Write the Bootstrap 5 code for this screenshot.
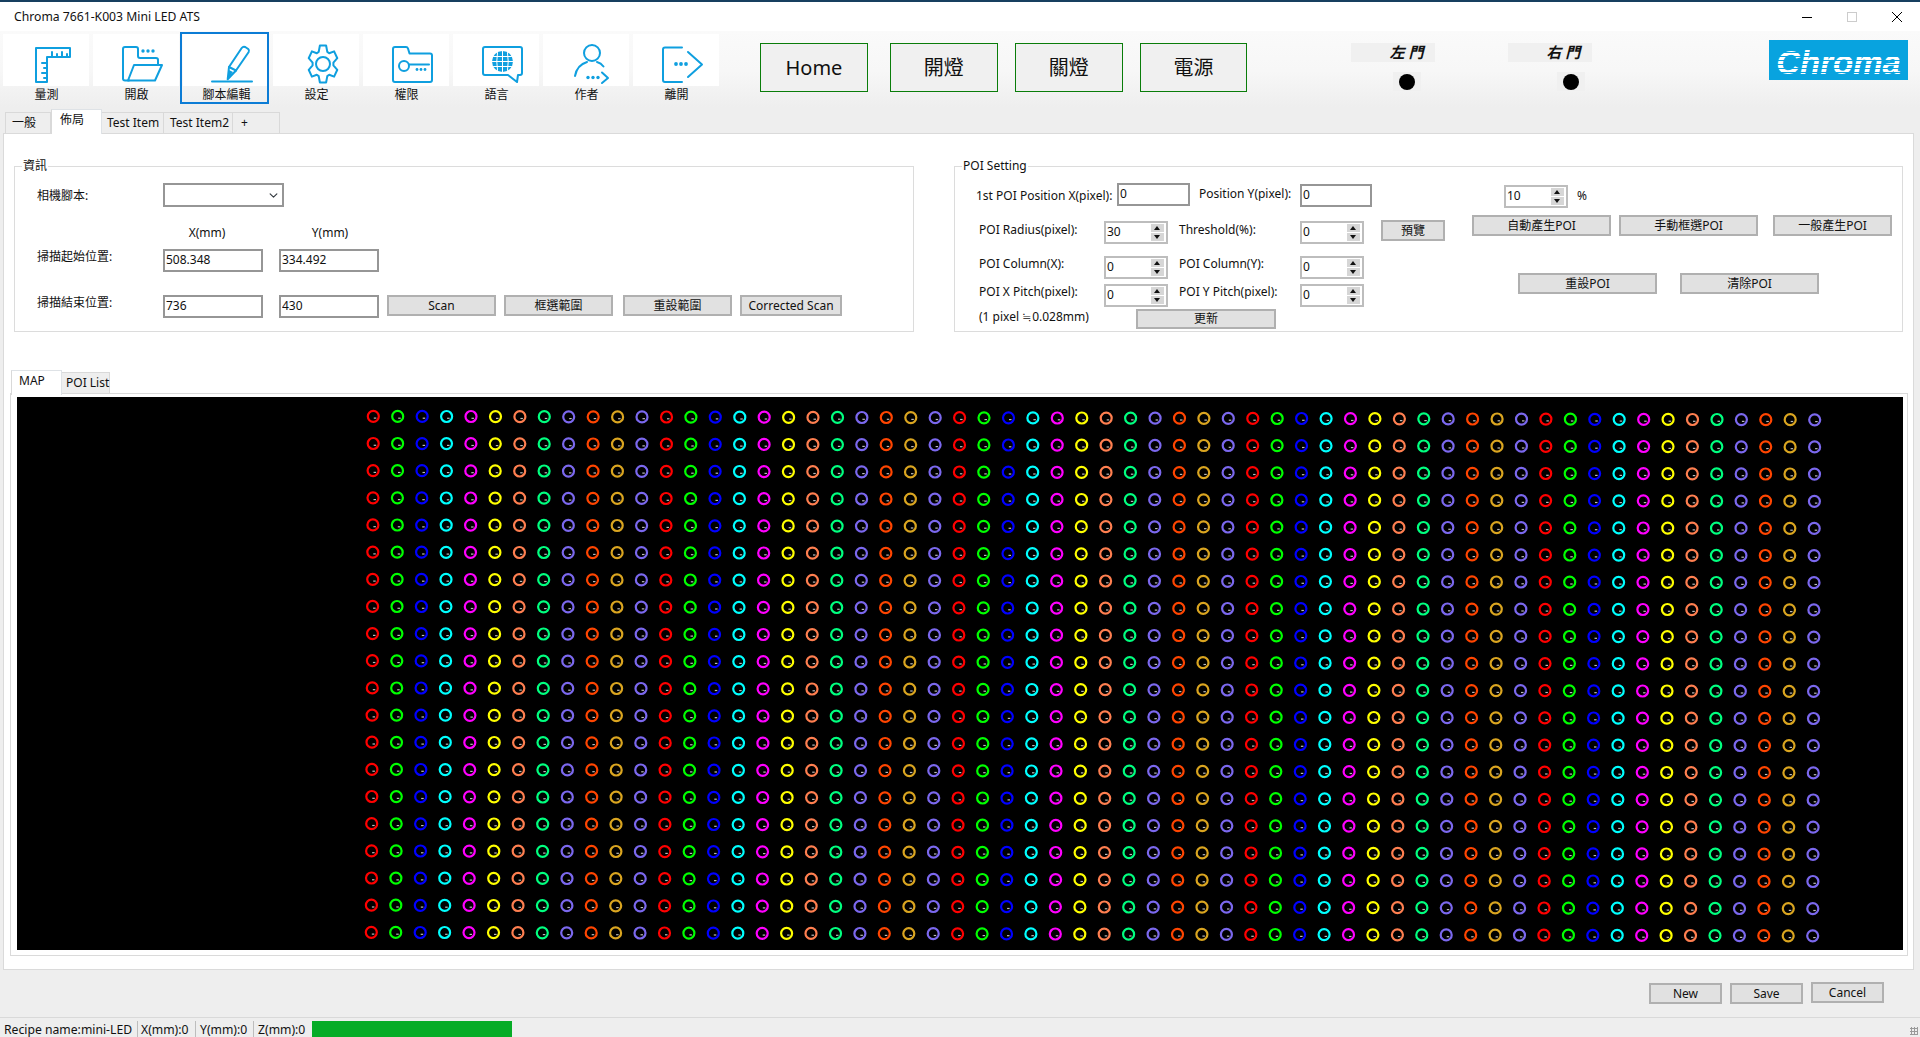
<!DOCTYPE html>
<html lang="zh-Hant">
<head>
<meta charset="utf-8">
<title>Chroma 7661-K003 Mini LED ATS</title>
<link href="https://cdn.jsdelivr.net/npm/bootstrap@5.3.0/dist/css/bootstrap.min.css" rel="stylesheet">
<style>
html,body{height:1037px;overflow:hidden}
body{background:#eee;color:#111;font-family:"Noto Sans","Noto Sans CJK TC",sans-serif;font-size:12px;line-height:16px}
/* title bar */
.titlebar{height:31px;background:#fff;border-top:2px solid #163f5f;padding-left:14px}
.titlebar .ttl{font-size:12.2px}
.win{margin-right:18px;gap:35px}
.win svg{display:block}
/* ribbon */
.ribbon{height:102px;background:linear-gradient(#fafafa 0,#f7f7f7 40px,#eee 76px,#eee 100%)}
.ribbon-top{height:81px}
.tools{padding:1px 0 0 3px;gap:4px}
.tool{width:86px;height:72px;font-size:12px;text-align:center}
.tool-img{display:block;width:86px;height:52px;margin-top:2px;background:#fff}
.tool-img path,.tool-img circle,.tool-img line{fill:none;stroke:#0f9fdf;stroke-width:2;stroke-linecap:round;stroke-linejoin:round}
.tool-img .fill{fill:#0f9fdf;stroke:none}
.tool-img .wl{stroke:#fff;stroke-width:1}
.tool-label{display:block;margin-top:1px;padding-left:1px;line-height:16px}
.tool.active{width:89px;margin-left:-3px;padding-left:3px;outline:2px solid #0c7cd5;outline-offset:-2px;position:relative}
.big{width:108px;height:49px;margin-top:12px;background:#f0f0f0;border:1px solid #0a7d0a;border-radius:0;font-size:20px;line-height:24px;padding:0;color:#111}
.big.b1{margin-left:41px}.big.b2{margin-left:22px}.big.b3{margin-left:17px}
.door{width:84px;margin-top:12px}
.door.d1{margin-left:104px}.door.d2{margin-left:73px}
.door-label{height:19px;background:#f0f0f0;font-weight:700;font-style:italic;font-size:15px;line-height:19px;letter-spacing:4px;padding-left:38px;white-space:nowrap}
.door.d2 .door-label{padding-left:38px}
.led-box{width:28px;height:19px;margin:10px 0 0 42px;background:#f0f0f0}
.door.d2 .led-box{margin-left:49px}
.led{width:16px;height:16px;border-radius:50%;background:#000}
.logo{width:139px;height:40px;margin:9px 12px 0 177px;background:#08a3df;color:#fff;font:italic 700 33px/46px "Liberation Sans",sans-serif;position:relative;text-align:center;overflow:hidden}
.logo::after{content:"";position:absolute;inset:0;background:repeating-linear-gradient(#08a3df 0,#08a3df 1px,transparent 1px,transparent 4px)}
/* tabs */
.nav-tabs.t-main{height:21px;padding-left:5px;border:0;--bs-nav-tabs-border-width:0}
.t-main .nav-link,.t-map .nav-link{border:1px solid #d9d9d9;border-bottom:0;border-left:0;border-radius:0;background:#eee;color:#111;padding:0;height:21px;line-height:20px;margin:0;font-size:12px;white-space:nowrap}
.t-main li:first-child .nav-link{border-left:1px solid #d9d9d9}
.t-main .n1{width:46px;padding-left:6px}.t-main .n2{width:51px;padding-left:8px}.t-main .n3{width:62px;padding-left:5px}.t-main .n4{width:69px;padding-left:6px}.t-main .n5{width:47px;padding-left:8px}
.t-main .nav-link.active{height:25px;margin-top:-3px;background:#fff;color:#111;border-left:1px solid #d9d9d9;line-height:19px;position:relative;z-index:1}
/* main panel */
.panel-main{height:837px;margin:0 6px 0 3px;background:#fff;border:1px solid #dadada}
.groups{padding-left:10px;gap:40px;padding-top:24px}
fieldset.grp{border:1px solid #dcdcdc;height:174px;padding:0;margin:0;min-width:0}
fieldset.g1{width:900px}
fieldset.g2{width:949px}
fieldset.grp legend{float:none;width:auto;font-size:12px;line-height:16px;margin:0 0 0 7px;padding:0 1px}
.fr{display:flex;align-items:flex-start}
.lbl{display:block;flex:none;white-space:nowrap}
/* form controls */
.form-control.ctl{border:2px solid #969696;border-radius:0;height:23px;padding:0 1px 2px;font-size:12px;line-height:17px;color:#111;box-shadow:none;flex:none}
.form-select.ctl{border:2px solid #969696;border-radius:0;height:24px;padding:0;background-position:right 3px center;background-size:11px 9px;flex:none}
.spin{width:64px;height:23px;border:2px solid #bdbdbd;display:flex;flex:none;background:#fff}
.spin .val{flex:1;padding-left:1px;line-height:17px;font-size:12px}
.arrows{width:13px;margin:1px 2px 0 0;display:flex;flex-direction:column;justify-content:space-between;height:17px}
.arr{display:block;height:8px;background:#d6d6d6;position:relative}
.arr::after{content:"";position:absolute;left:3px;border-left:3.5px solid transparent;border-right:3.5px solid transparent}
.arr.up::after{top:2px;border-bottom:4px solid #111}
.arr.dn::after{top:2px;border-top:4px solid #111}
.btn.wb{background:#e1e1e1;border:2px solid #b0b0b0;border-radius:0;height:21px;padding:0;font-size:12px;line-height:16px;color:#111;flex:none;white-space:nowrap}
/* sizes from the reference */
.w64{width:64px}.w73{width:73px}.w100{width:100px}.w72{width:72px}.w102{width:102px}.w109{width:109px}.w119{width:119px}.w121{width:121px}.w139{width:139px}.w140{width:140px}
.h20{height:20px!important}
.lw126{width:126px}.lw88{width:88px;text-align:center}.lw158{width:158px;text-align:center}
.lw141{width:141px}.lw101{width:101px}.lw125{width:125px}.lw121{width:121px}.lw157{width:157px}
.gap-t9{margin-top:9px}.gap-t18{margin-top:18px}.gap-t8{margin-top:8px}.gap-t23{margin-top:23px}.gap-t14{margin-top:14px}.gap-t12{margin-top:12px}.gap-t5{margin-top:5px}.gap-t2{margin-top:2px}.gap-t11{margin-top:11px}.gap-t7{margin-top:7px}.gap-t37{margin-top:37px}.up1{margin-top:-1px}.dn1{margin-top:1px}.dn3{margin-top:3px}.dn5{margin-top:5px}
.gap-l22{margin-left:22px}.gap-l16{margin-left:16px}.gap-l8{margin-left:8px}.gap-l10{margin-left:10px}.gap-l21{margin-left:21px}.gap-l9{margin-left:9px}.gap-l24{margin-left:24px}.gap-l11{margin-left:11px}.gap-l17{margin-left:17px}.gap-l15{margin-left:15px}.gap-l46{margin-left:46px}.gap-l23{margin-left:23px}.gap-l32{margin-left:32px}.gap-l148{margin-left:148px}
.cols{gap:27px}.col-l{width:490px}
/* map */
.map-area{margin:38px 5px 0 6px}
.nav-tabs.t-map{height:23px;border:0;padding-left:1px;--bs-nav-tabs-border-width:0}
.t-map .nav-link{height:21px;margin-top:2px;width:48px;padding-left:4px;line-height:20px}
.t-map .nav-link.active{height:25px;margin-top:0;width:51px;padding-left:7px;background:#fff;border-left:1px solid #d9d9d9;color:#111;line-height:19px;position:relative;z-index:1}
.map-pane{height:563px;border:1px solid #dadada;padding:3px 4px 5px 6px;background:#fff}
.map-canvas{background:#000;height:553px;width:1886px;overflow:hidden}
.map-canvas svg{display:block}
/* footer */
.actions{height:47px;padding:13px 36px 0 0;gap:8px}
.actions .btn.c{margin-top:-1px}
.statusbar{height:20px;border-top:1px solid #d9d9d9;position:relative;font-size:12.2px;line-height:20px}
.seg{height:16px;line-height:17px;margin-top:3px;border-right:1px solid #bdbdbd;white-space:nowrap}
.seg.s1{width:138px;padding-left:4px}.seg.s2{width:58px;padding-left:3px}.seg.s3{width:58px;padding-left:4px}.seg.s4{width:58px;padding-left:4px;border:0}
.progress.pg{width:200px;height:16px;margin-top:3px;border-radius:0;background:#e6e6e6}
.progress.pg .progress-bar{background:#06ac26}
.grip{position:absolute;right:2px;bottom:2px;width:8px;height:8px;background-image:radial-gradient(#9a9a9a 1px,transparent 1.2px);background-size:3px 3px}
</style>
</head>
<body>

<div class="titlebar d-flex align-items-center justify-content-between">
  <span class="ttl">Chroma 7661-K003 Mini LED ATS</span>
  <div class="d-flex align-items-center win">
    <svg width="10" height="10" viewBox="0 0 10 10"><line x1="0" y1="5.5" x2="10" y2="5.5" stroke="#000" stroke-width="1"/></svg>
    <svg width="10" height="10" viewBox="0 0 10 10"><rect x=".5" y=".5" width="9" height="9" fill="none" stroke="#ccc"/></svg>
    <svg width="10" height="10" viewBox="0 0 10 10"><path d="M0 0L10 10M10 0L0 10" stroke="#000" stroke-width="1" fill="none"/></svg>
  </div>
</div>

<div class="ribbon">
  <div class="ribbon-top d-flex align-items-start">
    <div class="tools d-flex">
      <div class="tool"><svg class="tool-img" viewBox="0 0 86 52"><path d="M33 14h34v9H44v25H33z"/><path d="M49 23v-5M54 23v-3M59 23v-5M64 23v-3M44 29h-5M44 34h-3M44 39h-5M44 44h-3"/></svg><span class="tool-label">量測</span></div>
      <div class="tool"><svg class="tool-img" viewBox="0 0 86 52"><path d="M36 46.500h-4q-2 0-2-2V15q0-2 2-2h11q2 0 2 2v7q0 2 2 2h16q2 0 2 2v5"/><path d="M41 31h28l-7 15.500H35z"/><circle class="fill" cx="50" cy="17" r="1.700"/><circle class="fill" cx="55" cy="17" r="1.700"/><circle class="fill" cx="60" cy="17" r="1.700"/></svg><span class="tool-label">開啟</span></div>
      <div class="tool active"><svg class="tool-img" viewBox="0 0 86 52"><path d="M46 33L58.700 14q1.500-2 3.500-1l3 2q1.500 1.500.5 3L53 36.500L44.700 45.300z"/><path d="M46 33l7 3.500"/><path class="fill" d="M46 36l4 2-5 7z"/><path d="M29 47.500h40"/></svg><span class="tool-label">腳本編輯</span></div>
      <div class="tool"><svg class="tool-img" viewBox="0 0 86 52"><path id="gear" d=""/><circle cx="50" cy="30" r="7"/></svg><span class="tool-label">設定</span></div>
      <div class="tool"><svg class="tool-img" viewBox="0 0 86 52"><path d="M32 13h11q1.500 0 2 1.500l1.500 5h20.500q2 0 2 2V46q0 2-2 2H32q-2 0-2-2V15q0-2 2-2z"/><circle cx="41" cy="32" r="5"/><path d="M46 30.500h20"/><circle class="fill" cx="54" cy="35.500" r="1.400"/><circle class="fill" cx="58" cy="35.500" r="1.400"/><circle class="fill" cx="62" cy="35.500" r="1.400"/></svg><span class="tool-label">權限</span></div>
      <div class="tool"><svg class="tool-img" viewBox="0 0 86 52"><path d="M32 13h35q2 0 2 2v24q0 2-2 2h-2l-1 7-9-7H32q-2 0-2-2V15q0-2 2-2z"/><circle class="fill" cx="49.500" cy="27.500" r="10.500"/><path class="wl" d="M39 27.500h21M40.500 22.500h18M40.500 32.500h18M49.500 17v21M44.500 18.500q-1.500 9 0 18M54.500 18.500q1.500 9 0 18"/></svg><span class="tool-label">語言</span></div>
      <div class="tool"><svg class="tool-img" viewBox="0 0 86 52"><circle cx="49" cy="19" r="8"/><path d="M32 42q2-11 12-14M54 28q4 1 6.500 4.500"/><circle class="fill" cx="45" cy="43.500" r="1.700"/><circle class="fill" cx="50" cy="43.500" r="1.700"/><circle class="fill" cx="55" cy="43.500" r="1.700"/><path d="M59 38.500l6 5.500-6 5"/></svg><span class="tool-label">作者</span></div>
      <div class="tool"><svg class="tool-img" viewBox="0 0 86 52"><path d="M49 13.500H32q-2 0-2 2V46q0 2 2 2h17"/><circle class="fill" cx="43" cy="30" r="1.900"/><circle class="fill" cx="48" cy="30" r="1.900"/><circle class="fill" cx="53" cy="30" r="1.900"/><path d="M55 18l14 12.500L55 43"/></svg><span class="tool-label">離開</span></div>
    </div>
    <button type="button" class="btn big b1">Home</button>
    <button type="button" class="btn big b2">開燈</button>
    <button type="button" class="btn big b3">關燈</button>
    <button type="button" class="btn big b3">電源</button>
    <div class="door d1">
      <div class="door-label">左門</div>
      <div class="led-box d-flex align-items-center justify-content-center"><span class="led"></span></div>
    </div>
    <div class="door d2">
      <div class="door-label">右門</div>
      <div class="led-box d-flex align-items-center justify-content-center"><span class="led"></span></div>
    </div>
    <div class="logo">Chroma</div>
  </div>
  <ul class="nav nav-tabs t-main">
    <li class="nav-item"><a class="nav-link n1" href="#">一般</a></li>
    <li class="nav-item"><a class="nav-link n2 active" href="#">佈局</a></li>
    <li class="nav-item"><a class="nav-link n3" href="#">Test Item</a></li>
    <li class="nav-item"><a class="nav-link n4" href="#">Test Item2</a></li>
    <li class="nav-item"><a class="nav-link n5" href="#">+</a></li>
  </ul>
</div>

<div class="panel-main">
  <div class="groups d-flex align-items-start">
    <fieldset class="grp g1">
      <legend>資訊</legend>
      <div class="fr gap-t9 gap-l22">
        <span class="lbl lw126 dn5">相機腳本:</span>
        <select class="form-select ctl w121" aria-label="相機腳本"></select>
      </div>
      <div class="fr gap-t18 gap-l148">
        <span class="lbl lw88">X(mm)</span><span class="lbl lw158">Y(mm)</span>
      </div>
      <div class="fr gap-t8 gap-l22">
        <span class="lbl lw126">掃描起始位置:</span>
        <input class="form-control ctl w100" value="508.348">
        <input class="form-control ctl w100 gap-l16" value="334.492">
      </div>
      <div class="fr gap-t23 gap-l22">
        <span class="lbl lw126">掃描結束位置:</span>
        <input class="form-control ctl w100" value="736">
        <input class="form-control ctl w100 gap-l16" value="430">
        <button type="button" class="btn wb w109 gap-l8">Scan</button>
        <button type="button" class="btn wb w109 gap-l8">框選範圍</button>
        <button type="button" class="btn wb w109 gap-l10">重設範圍</button>
        <button type="button" class="btn wb w102 gap-l8">Corrected Scan</button>
      </div>
    </fieldset>

    <fieldset class="grp g2">
      <legend>POI Setting</legend>
      <div class="d-flex cols">
        <div class="col-l">
          <div class="fr gap-t9 gap-l21">
            <span class="lbl lw141 dn5">1st POI Position X(pixel):</span>
            <input class="form-control ctl w73" value="0">
            <span class="lbl lw101 gap-l9 dn3">Position Y(pixel):</span>
            <input class="form-control ctl w72 dn1" value="0">
          </div>
          <div class="fr gap-t14 gap-l24">
            <span class="lbl lw125 dn1">POI Radius(pixel):</span>
            <div class="spin"><span class="val">30</span><span class="arrows"><span class="arr up"></span><span class="arr dn"></span></span></div>
            <span class="lbl lw121 gap-l11 dn1">Threshold(%):</span>
            <div class="spin"><span class="val">0</span><span class="arrows"><span class="arr up"></span><span class="arr dn"></span></span></div>
            <button type="button" class="btn wb w64 gap-l17 up1">預覽</button>
          </div>
          <div class="fr gap-t12 gap-l24">
            <span class="lbl lw125">POI Column(X):</span>
            <div class="spin"><span class="val">0</span><span class="arrows"><span class="arr up"></span><span class="arr dn"></span></span></div>
            <span class="lbl lw121 gap-l11">POI Column(Y):</span>
            <div class="spin"><span class="val">0</span><span class="arrows"><span class="arr up"></span><span class="arr dn"></span></span></div>
          </div>
          <div class="fr gap-t5 gap-l24">
            <span class="lbl lw125">POI X Pitch(pixel):</span>
            <div class="spin"><span class="val">0</span><span class="arrows"><span class="arr up"></span><span class="arr dn"></span></span></div>
            <span class="lbl lw121 gap-l11">POI Y Pitch(pixel):</span>
            <div class="spin"><span class="val">0</span><span class="arrows"><span class="arr up"></span><span class="arr dn"></span></span></div>
          </div>
          <div class="fr gap-t2 gap-l24">
            <span class="lbl lw157">(1 pixel ≒0.028mm)</span>
            <button type="button" class="btn wb w140 h20">更新</button>
          </div>
        </div>
        <div>
          <div class="fr gap-t11 gap-l32">
            <div class="spin"><span class="val">10</span><span class="arrows"><span class="arr up"></span><span class="arr dn"></span></span></div>
            <span class="lbl gap-l9 dn3">%</span>
          </div>
          <div class="fr gap-t7">
            <button type="button" class="btn wb w139">自動產生POI</button>
            <button type="button" class="btn wb w139 gap-l8">手動框選POI</button>
            <button type="button" class="btn wb w119 gap-l15">一般產生POI</button>
          </div>
          <div class="fr gap-t37 gap-l46">
            <button type="button" class="btn wb w139">重設POI</button>
            <button type="button" class="btn wb w139 gap-l23">清除POI</button>
          </div>
        </div>
      </div>
    </fieldset>
  </div>

  <div class="map-area">
    <ul class="nav nav-tabs t-map">
      <li class="nav-item"><a class="nav-link active" href="#">MAP</a></li>
      <li class="nav-item"><a class="nav-link" href="#">POI List</a></li>
    </ul>
    <div class="map-pane">
      <div class="map-canvas"><svg id="map" width="1886" height="553" viewBox="0 0 1886 553" xmlns="http://www.w3.org/2000/svg"></svg></div>
    </div>
  </div>
</div>

<div class="actions d-flex justify-content-end">
  <button type="button" class="btn wb w73">New</button>
  <button type="button" class="btn wb w73">Save</button>
  <button type="button" class="btn wb w73 c">Cancel</button>
</div>

<div class="statusbar d-flex">
  <span class="seg s1">Recipe name:mini-LED</span>
  <span class="seg s2">X(mm):0</span>
  <span class="seg s3">Y(mm):0</span>
  <span class="seg s4">Z(mm):0</span>
  <div class="progress pg"><div class="progress-bar w-100"></div></div>
  <span class="grip"></span>
</div>

<script src="https://cdn.jsdelivr.net/npm/bootstrap@5.3.0/dist/js/bootstrap.bundle.min.js"></script>
<script>
(function(){
  var colors=['#ff0000','#00ff00','#0000ff','#00ffff','#ff00ff','#ffff00','#ff7f50','#00ff7f','#7b68ee','#ff4500','#daa520','#7b68ee'];
  var s='';
  for(var r=0;r<20;r++){for(var c=0;c<60;c++){
    var x=373.3+24.43*c-0.105*r-17, y=416.3+27.16*r+0.059*c-397;
    s+='<circle cx="'+x.toFixed(1)+'" cy="'+y.toFixed(1)+'" r="5.5" fill="none" stroke="'+colors[c%12]+'" stroke-width="2.2"/>';
    s+='<rect x="'+(x+0.5).toFixed(1)+'" y="'+(y+1.2).toFixed(1)+'" width="2.5" height="1.2" fill="#bbb"/>';
  }}
  document.getElementById('map').innerHTML=s;
  var d='',cx=50,cy=30,n=6;
  for(var i=0;i<n;i++){
    var a=-90+i*60,pts=[[a-24,10.5],[a-12,15],[a+12,15],[a+24,10.5]];
    pts.forEach(function(p,j){
      var t=p[0]*Math.PI/180,px=cx+p[1]*Math.cos(t),py=cy+p[1]*1.26*Math.sin(t);
      d+=(d?'L':'M')+px.toFixed(1)+' '+py.toFixed(1);
    });
  }
  document.getElementById('gear').setAttribute('d',d+'Z');
})();
</script>
</body>
</html>
